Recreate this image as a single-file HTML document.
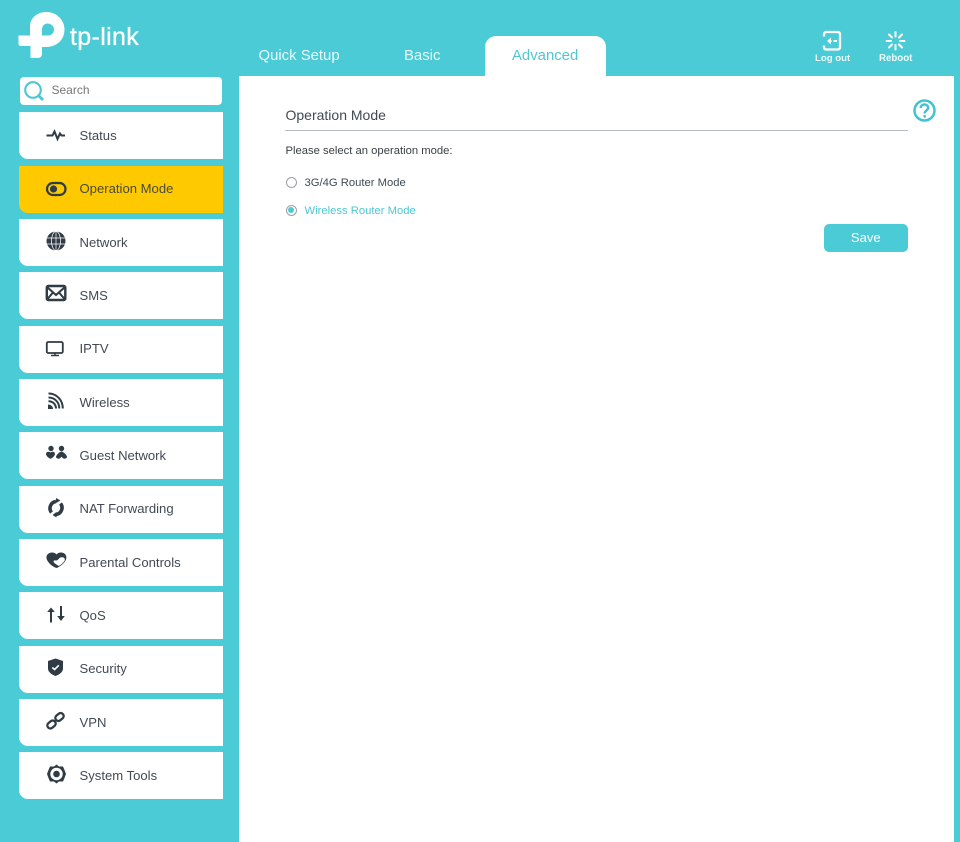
<!DOCTYPE html>
<html><head><meta charset="utf-8"><style>
*{box-sizing:border-box}
html,body{margin:0;padding:0}
body{width:960px;height:842px;background:#4acbd6;position:relative;overflow:hidden;font-family:"Liberation Sans",Arial,sans-serif;color:#3f4a54}
.a{position:absolute;white-space:nowrap}
.m{position:absolute;left:19px;width:204px;height:47px;background:#fff;border-bottom-left-radius:9px}
.m span{position:absolute;left:60.5px;top:15.500px;font-size:13.100px;line-height:16px;color:#424a55}
.m svg{position:absolute;left:24px;top:8px;width:27px;height:27px}
.on{background:#ffc900}
.on span{color:#4a4a3c}
</style></head><body>
<svg class="a" style="left:0;top:0" width="70" height="70" viewBox="0 0 70 70"><path fill="#fff" d="M30 25C31 17 38 12 46.500 12C56.500 12 64.500 20 64.500 29.500C64.500 40 56.500 47 46 47H42V35.500H48C51.500 35.500 54 33 54 29.500C54 26 51 23.500 47.500 23.500C44.300 23.500 42 26 42 29.500V54C42 56.500 40 58 37.500 58H30.500V46H21C19.500 46 18.500 45 18.500 43.500V35.500H30Z"/></svg>
<div class="a" style="left:70px;top:22px;font-size:25px;line-height:30px;color:#fff;-webkit-text-stroke:.3px #fff;letter-spacing:.35px">tp-link</div>
<div class="a" style="left:258.500px;top:47px;font-size:14.900px;line-height:19px;color:#e9fafb">Quick Setup</div>
<div class="a" style="left:404px;top:47px;font-size:14.900px;line-height:19px;color:#e9fafb">Basic</div>
<div class="a" style="left:485px;top:36px;width:121px;height:42px;background:#fff;border-radius:11px 11px 0 0"></div>
<div class="a" style="left:512px;top:47px;font-size:14.900px;line-height:19px;color:#4fc6d2">Advanced</div>
<div class="a" style="left:239px;top:76px;width:715px;height:766px;background:#fff"></div>
<svg class="a" style="left:820px;top:30px" width="24" height="22" viewBox="0 0 24 22" fill="none" stroke="#fff"><path stroke-width="2.300" d="M4 6.500V4.500C4 2.500 5 2 6.500 2H17.500C19.500 2 20 3 20 4.500V17C20 18.500 19.500 19.500 17.500 19.500H6.500C5 19.500 4 19 4 17.500V15.500"/><path stroke-width="2" d="M17 11H13.500M11.500 11H10"/><path fill="#fff" stroke="none" d="M7 11L11 7.500V14.500Z"/></svg>
<div class="a" style="left:815px;top:52px;font-size:9.600px;line-height:13px;font-weight:bold;color:#f0fbfc">Log out</div>
<svg class="a" style="left:884px;top:30px" width="24" height="22" viewBox="0 0 24 22" fill="none" stroke="#fff" stroke-width="2" stroke-linecap="round"><path d="M11.500 2V6.500M11.500 15V19.500M2.500 11H7M16 11H20.500M5 4.500L8 7.500M15 14.500L18 17.500M18 4.500L15 7.500M8 14.500L5 17.500"/></svg>
<div class="a" style="left:879px;top:52px;font-size:9.700px;line-height:13px;font-weight:bold;color:#f0fbfc">Reboot</div>
<div class="a" style="left:20px;top:77px;width:202px;height:28px;background:#fff;border-radius:4px"></div>
<svg class="a" style="left:22px;top:79px" width="24" height="24" viewBox="0 0 24 24" fill="none" stroke="#4cc6d2"><circle cx="11" cy="11" r="7.800" stroke-width="2.100"/><path stroke-width="2.800" d="M16.500 16.500L21 21"/></svg>
<div class="a" style="left:51.500px;top:83px;font-size:12px;line-height:14px;color:#77777a">Search</div>

<div class="m" style="top:112px"><svg viewBox="0 0 27 27"><path fill="none" stroke="#2f3b45" stroke-width="2" d="M3.500 15.500H9.500L11.500 11.500L14.500 19L17 13.500L18.500 15.500H22"/></svg><span style="top:16px">Status</span></div>
<div class="m on" style="top:165.500px"><svg viewBox="0 0 27 27"><rect x="4" y="9" width="18.500" height="12" rx="6" fill="none" stroke="#2f3b45" stroke-width="2.200"/><circle cx="10.500" cy="15" r="3.600" fill="#2f3b45"/></svg><span>Operation Mode</span></div>
<div class="m" style="top:219px"><svg viewBox="0 0 27 27"><circle cx="13" cy="14" r="9.500" fill="#2f3b45"/><g fill="none" stroke="#fff" stroke-width=".7"><ellipse cx="13" cy="14" rx="4.500" ry="9.500"/><path d="M13 4.500V23.500M4 11H22M4 17H22"/></g></svg><span>Network</span></div>
<div class="m" style="top:272px"><svg viewBox="0 0 27 27"><rect x="3.800" y="6" width="18.500" height="14" rx="1.500" fill="none" stroke="#2f3b45" stroke-width="2.400"/><path d="M4 7L13 15L22 7M4 19.500L10 12.500M22 19.500L16 12.500" fill="none" stroke="#2f3b45" stroke-width="2.100"/></svg><span>SMS</span></div>
<div class="m" style="top:325.500px"><svg viewBox="0 0 27 27"><rect x="3.800" y="8" width="16" height="11" rx="1.500" fill="none" stroke="#2f3b45" stroke-width="1.800"/><path d="M8 21.500H16M12 19V21.500" fill="none" stroke="#2f3b45" stroke-width="1.500"/></svg><span>IPTV</span></div>
<div class="m" style="top:379px"><svg viewBox="0 0 27 27"><g fill="none" stroke="#2f3b45" stroke-width="2"><path d="M5.500 6.500C14 6.500 19.800 13.500 19.800 21.500"/><path d="M5.500 10.500C12 10.500 16.300 15.500 16.300 21.500"/><path d="M5.500 14.300C10 14.300 13 17.500 13 21.500"/></g><path d="M5 17.500C8 17.500 10 19.500 10 22H5Z" fill="#2f3b45"/></svg><span>Wireless</span></div>
<div class="m" style="top:432px"><svg viewBox="0 0 27 27"><circle cx="8" cy="8.500" r="2.700" fill="#2f3b45"/><circle cx="18.500" cy="8.500" r="2.700" fill="#2f3b45"/><path fill="#2f3b45" d="M3 14C3 11.800 5.500 11 7.600 12.500C9.500 11 12 11.800 12 14C12 15.500 9.800 17.800 7.600 18.800C5 17.800 3 15.500 3 14ZM13 16.500C14 14.500 16 12 18.500 11.500C21 12 23 14.500 24 16.500C24 18.700 21.500 19.200 20 18.200L18.500 16.800L17 18.200C15.500 19.200 13 18.700 13 16.500Z"/></svg><span>Guest Network</span></div>
<div class="m" style="top:485.500px"><svg viewBox="0 0 27 27"><g fill="none" stroke="#2f3b45" stroke-width="3.600"><path d="M8.500 18.500A6.800 6.800 0 0 1 13 7.500"/><path d="M17.500 9.500A6.800 6.800 0 0 1 13 20.500"/></g><path fill="#2f3b45" d="M13 4L17.500 6.500L13 9ZM13.500 18L9.500 21L13.500 23.500Z"/></svg><span>NAT Forwarding</span></div>
<div class="m" style="top:539px"><svg viewBox="0 0 27 27"><path fill="#2f3b45" d="M13.500 7.500C15 5.500 18 5 20.500 6C23 7.200 24 10 23 12.500C22 15.500 17 20 13.500 21C9 19.500 5 15.500 3.800 12.500C2.800 9.500 4 7 6.500 6C9 5 12 5.500 13.500 7.500Z"/><path fill="#fff" d="M16.500 11C18 10 20 10 21.300 11C22.200 12.300 21.800 14 20.500 15.300C19 17 17.500 18 15.800 19C14 18 12 16.800 10.800 15.300C10 14 11 13 12.500 13.500C14 13.800 15 12.800 16.500 11Z"/></svg><span>Parental Controls</span></div>
<div class="m" style="top:592px"><svg viewBox="0 0 27 27"><path fill="none" stroke="#2f3b45" stroke-width="2" d="M8 10V22.500M18 6V16"/><path fill="#2f3b45" d="M8 7.500L11.800 12H4.200ZM18 21L21.800 16H14.200Z"/></svg><span>QoS</span></div>
<div class="m" style="top:645.500px"><svg viewBox="0 0 27 27"><path fill="#2f3b45" d="M12.500 4.500L20 7V14.500C20 18 16.500 20.500 12.500 22C8.500 20.500 5 18 5 14.500V7Z"/><path fill="none" stroke="#fff" stroke-width="1.600" d="M9.300 13.500L11.600 15.500L15.800 11.300"/></svg><span>Security</span></div>
<div class="m" style="top:699px"><svg viewBox="0 0 27 27"><g fill="none" stroke="#2f3b45" stroke-width="2.300"><rect x="4" y="14.500" width="9" height="6" rx="3" transform="rotate(-40 8.500 17.500)"/><rect x="12" y="7" width="9" height="6" rx="3" transform="rotate(-40 16.500 10)"/></g></svg><span>VPN</span></div>
<div class="m" style="top:752px"><svg viewBox="0 0 27 27"><path fill="#2f3b45" d="M13.500 4.500L16 6.500L20 6.500L21.500 10L23 14L21.500 18L20 21.500H16L13.500 23.500L11 21.500H7L5.500 18L4 14L5.500 10L7 6.500H11Z"/><circle cx="13.500" cy="14" r="6.200" fill="#fff"/><circle cx="13.500" cy="14" r="3.300" fill="#2f3b45"/></svg><span>System Tools</span></div>

<div class="a" style="left:285.500px;top:107px;font-size:14px;line-height:17px;color:#3f4a54">Operation Mode</div>
<div class="a" style="left:285px;top:130px;width:623px;height:1px;background:#b6bcc0"></div>
<svg class="a" style="left:912px;top:98px" width="26" height="26" viewBox="0 0 26 26" fill="none" stroke="#3fc4d0"><circle cx="12.500" cy="12.500" r="10" stroke-width="2.500"/><path stroke-width="2.400" d="M8.700 10C8.700 7.800 10.500 6.500 12.500 6.500C14.700 6.500 16.300 8 16.300 9.800C16.300 12 13 12.500 12.700 15V15.500"/><circle cx="12.700" cy="18.300" r="1.400" fill="#3fc4d0" stroke="none"/></svg>
<div class="a" style="left:285.500px;top:144px;font-size:11.250px;line-height:14px;color:#3a3f45">Please select an operation mode:</div>
<div class="a" style="left:285.500px;top:176.500px;width:11px;height:11px;border:1px solid #9aa0a4;border-radius:50%;background:#fff"></div>
<div class="a" style="left:304.500px;top:176px;font-size:11.250px;line-height:14px;color:#3f4a54">3G/4G Router Mode</div>
<div class="a" style="left:285.500px;top:204.500px;width:11px;height:11px;border:1px solid #9aa0a4;border-radius:50%;background:#fff"></div>
<div class="a" style="left:288px;top:207px;width:6px;height:6px;border-radius:50%;background:#4acbd6"></div>
<div class="a" style="left:304.500px;top:204px;font-size:11.250px;line-height:14px;color:#4fc6d2">Wireless Router Mode</div>
<div class="a" style="left:823.500px;top:224px;width:84.500px;height:28px;background:#4acbd6;border-radius:5px;color:#fff;font-size:13px;line-height:27px;text-align:center">Save</div>
</body></html>
